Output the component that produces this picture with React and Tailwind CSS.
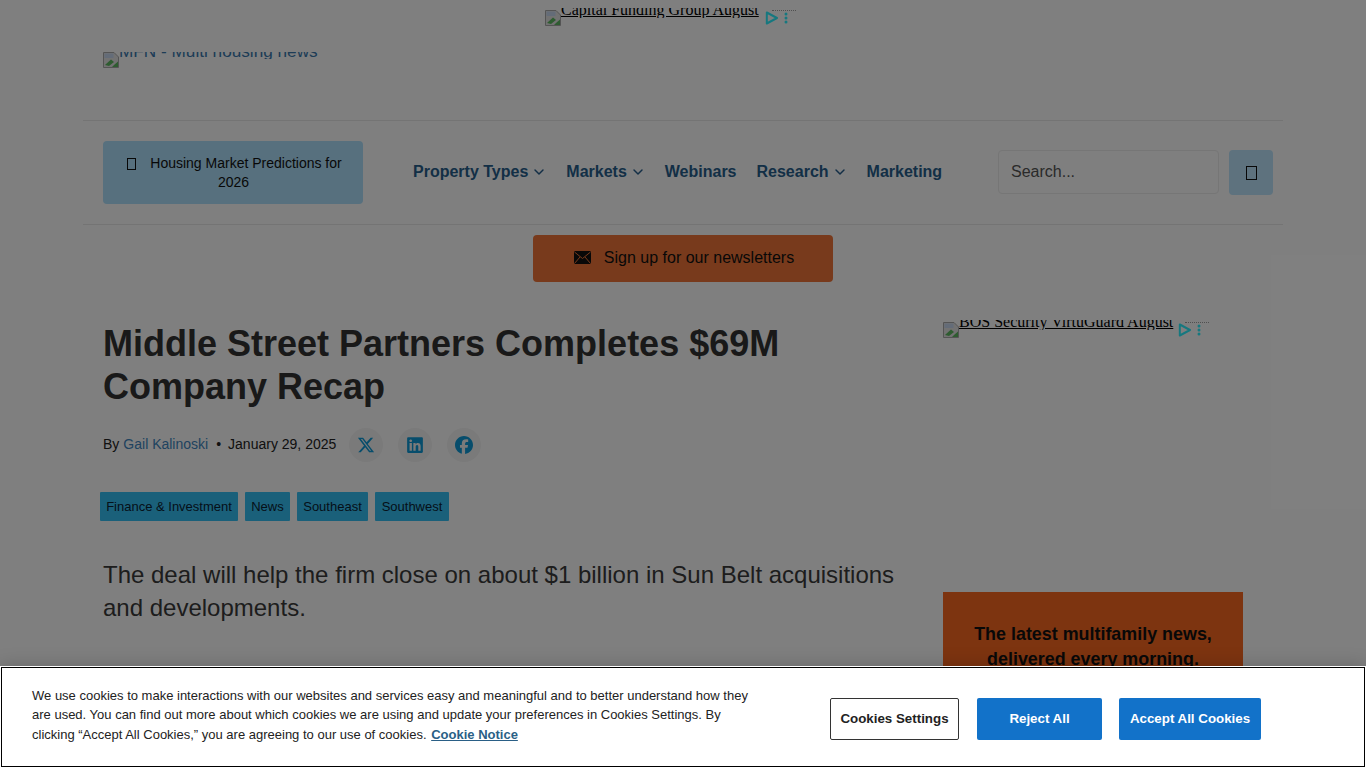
import React from 'react';
import { FaXTwitter, FaLinkedin, FaFacebook } from 'react-icons/fa6';
import { ChevronDown } from 'lucide-react';

function BrokenImage() {
  return (
    <svg width="16" height="16" viewBox="0 0 16 16" className="shrink-0">
      <path d="M0.5 0.5H11L15.5 5V15.5H0.5Z" fill="#e4e4e4" stroke="#a8a8a8" />
      <path d="M1.5 1.5H10.5V6H1.5Z" fill="#c8d8f0" />
      <path d="M2 13L8 7.5L11 10L6 14Z" fill="#5cb860" />
      <path d="M11 13L15 9.5V15H9Z" fill="#5cb860" />
    </svg>
  );
}

function AdChoices() {
  return (
    <div className="flex items-center gap-[5px] shrink-0">
      <svg width="14" height="14" viewBox="0 0 14 14">
        <path d="M1.8 1.5L12 7L1.8 12.5Z" fill="none" stroke="#2cf0ff" strokeWidth="2" strokeLinejoin="round" />
      </svg>
      <svg width="4" height="12" viewBox="0 0 4 12">
        <circle cx="2" cy="2" r="1.5" fill="#2cf0ff" />
        <circle cx="2" cy="6" r="1.5" fill="#2cf0ff" />
        <circle cx="2" cy="10" r="1.5" fill="#2cf0ff" />
      </svg>
    </div>
  );
}

function BrokenAd({ alt, textWidth }) {
  return (
    <div className="relative flex items-start h-4">
      <BrokenImage />
      <div className={`h-[10px] -mt-[2px] overflow-hidden ${textWidth}`}>
        <span className="block -mt-[7px] text-[16px] leading-[18px] text-black underline whitespace-nowrap font-['Liberation_Serif',serif]">{alt}</span>
      </div>
      <div className="mt-[1px]"><AdChoices /></div>
      <div className="absolute top-0 right-[-8px] w-6 border-t border-dotted border-[#a0a0a0]" />
    </div>
  );
}

function Tofu({ className = '' }) {
  return <span className={`inline-block border border-[#111] ${className}`} />;
}

function NavItem({ label, chevron, className = '' }) {
  return (
    <a className={`flex items-center text-[16px] font-bold text-[#275e8c] whitespace-nowrap ${className}`}>
      {label}
      {chevron && <ChevronDown className="w-4 h-4 ml-[3px] text-[#275e8c]" strokeWidth={2.2} />}
    </a>
  );
}

function SocialIcon({ children }) {
  return (
    <div className="w-[34px] h-[34px] rounded-full bg-[#f4f4f4] flex items-center justify-center text-[#0e9bd8] text-[18px]">
      {children}
    </div>
  );
}

function Tag({ label, width }) {
  return <a className={`h-[29px] flex items-center justify-center text-[13px] rounded-[1px] bg-[#35c0f5] text-[#0b2233] whitespace-nowrap ${width}`}>{label}</a>;
}

export default function App() {
  return (
    <div className="relative h-[768px] overflow-hidden bg-white text-[#444] font-['Liberation_Sans',Arial,sans-serif]">
      <div className="w-[1200px] mx-auto">
        {/* ADS + LOGO */}
        <div className="h-[121px] border-b border-[#e8e8e8] pt-[10px]">
          <div className="flex justify-center pr-[33px]">
            <BrokenAd alt="Capital Funding Group August" textWidth="w-[204px]" />
          </div>
          <div className="flex items-start h-4 mt-[26px] ml-5">
            <BrokenImage />
            <div className="h-[7px] overflow-hidden">
              <span className="block -mt-[11px] text-[17.2px] leading-5 text-[#3a78ad] whitespace-nowrap">MFN - Multi housing news</span>
            </div>
          </div>
        </div>

        {/* NAV */}
        <div className="h-[104px] border-b border-[#e8e8e8] flex items-center pl-5 pr-[10px] pb-[2px]">
          <a className="w-[260px] h-[63px] mt-[2px] pt-[1px] rounded bg-[#aee0fc] flex items-center justify-center text-center text-[14px] leading-[19px] text-[#111] pl-[23px] pr-5">
            <span><Tofu className="w-[9px] h-[12px] mr-[14px] align-[-2px]" />Housing Market Predictions for <span className="block -ml-[2px]">2026</span></span>
          </a>
          <nav className="flex items-center ml-[50px] gap-[19px]">
            <NavItem label="Property Types" chevron />
            <NavItem label="Markets" chevron />
            <NavItem label="Webinars" className="mr-[1px]" />
            <NavItem label="Research" chevron />
            <NavItem label="Marketing" />
          </nav>
          <div className="ml-auto mt-[2px] flex items-start gap-[10px]">
            <input readOnly placeholder="Search..." className="w-[221px] h-[44px] rounded border border-[#ececec] bg-white px-3 text-[16px] placeholder:text-[#555] outline-none" />
            <button className="w-[44px] h-[45px] rounded bg-[#bce4fc] flex items-center justify-center"><Tofu className="w-[11px] h-[14px]" /></button>
          </div>
        </div>

        <div className="flex justify-center mt-[10px]">
          <a className="w-[300px] h-[47px] pb-[2px] pl-[2px] rounded bg-[#f07538] flex items-center justify-center gap-[13px] text-[16px] text-[#111]">
            <svg width="17" height="13" viewBox="0 0 17 13">
              <rect width="17" height="13" rx="1" fill="#111" />
              <path d="M0.5 1L8.5 7.5L16.5 1M0.5 12.5L6 6M16.5 12.5L11 6" fill="none" stroke="#f07538" strokeWidth="1" />
            </svg>
            Sign up for our newsletters
          </a>
        </div>

        {/* ARTICLE + SIDEBAR */}
        <div className="flex mt-[40px] pl-5 gap-10">
          <main className="w-[800px]">
            <h1 className="text-[36px] leading-[43px] font-bold text-[#333]">Middle Street Partners Completes $69M Company Recap</h1>
            <div className="flex items-center mt-[20px] text-[14px] text-[#222]">
              <div className="flex items-center mb-[2px]">
                <span>By</span>
                <a className="ml-1 text-[#3f86c0]">Gail Kalinoski</a>
                <span className="ml-2 mr-[7px]">•</span>
                <span>January 29, 2025</span>
              </div>
              <div className="flex items-center gap-[15px] ml-[13px]">
                <SocialIcon><FaXTwitter /></SocialIcon>
                <SocialIcon><FaLinkedin /></SocialIcon>
                <SocialIcon><FaFacebook /></SocialIcon>
              </div>
            </div>
            <div className="flex gap-[7px] -ml-[3px] mt-[30px]">
              <Tag label="Finance & Investment" width="w-[138px]" />
              <Tag label="News" width="w-[45px]" />
              <Tag label="Southeast" width="w-[71px]" />
              <Tag label="Southwest" width="w-[74px]" />
            </div>
            <p className="mt-[37px] text-[24px] leading-[33px] text-[#3a3a3a]">The deal will help the firm close on about $1 billion in Sun Belt acquisitions and developments.</p>
          </main>
          <aside className="w-[300px]">
            <div className="flex">
              <BrokenAd alt="BOS Security VirtuGuard August" textWidth="w-[219px]" />
            </div>
            <div className="mt-[254px] h-[200px] bg-[#fa6820] pt-[30px] px-5 text-center text-[17.9px] leading-[25px] font-bold text-[#111]">
              The latest multifamily news, delivered every morning.
            </div>
          </aside>
        </div>
      </div>

      {/* OVERLAY */}
      <div className="absolute inset-0 bg-black/50" />

      {/* COOKIE BANNER */}
      <div className="absolute left-0 right-0 bottom-0 h-[102px] border border-white shadow-[0_0_18px_rgba(0,0,0,0.2)]">
        <div className="h-full bg-white border border-black flex items-center pl-[30px]">
          <p className="w-[730px] mb-[4px] text-[13px] leading-[19.5px] text-[#222]">
            We use cookies to make interactions with our websites and services easy and meaningful and to better understand how they are used. You can find out more about which cookies we are using and update your preferences in Cookies Settings. By clicking “Accept All Cookies,” you are agreeing to our use of cookies.{' '}
            <a className="ml-[1px] font-bold text-[#2a5f86] underline">Cookie Notice</a>
          </p>
          <div className="flex items-center ml-[68px] mt-[4px]">
            <button className="w-[129px] h-[42px] rounded-[2px] border border-[#333] bg-white text-[13.33px] font-bold text-[#222]">Cookies Settings</button>
            <button className="w-[125px] h-[42px] ml-[18px] rounded-[2px] bg-[#1272c9] text-[13.33px] font-bold text-white">Reject All</button>
            <button className="w-[142px] h-[42px] ml-[17px] rounded-[2px] bg-[#1272c9] text-[13.33px] font-bold text-white">Accept All Cookies</button>
          </div>
        </div>
      </div>
    </div>
  );
}
